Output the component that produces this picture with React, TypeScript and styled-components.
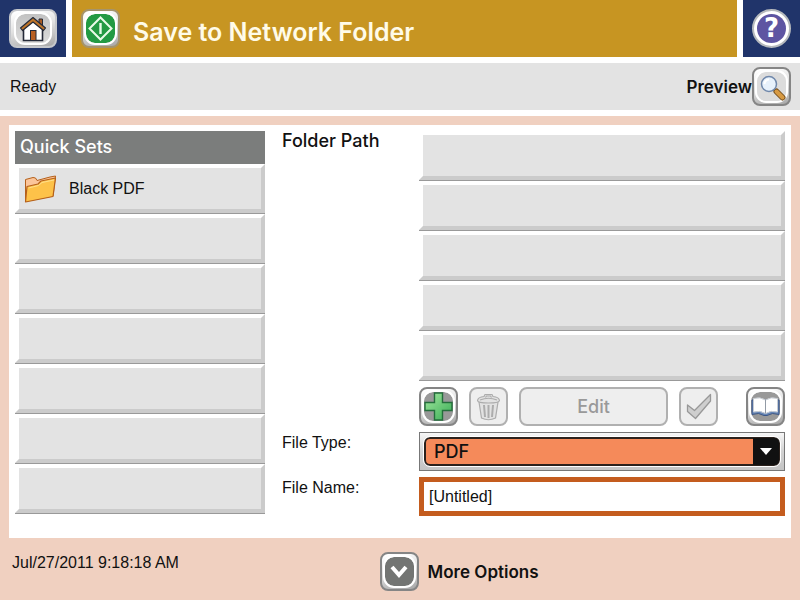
import React from "react";
import styled, { createGlobalStyle, css } from "styled-components";

const GlobalStyle = createGlobalStyle`
  *, *::before, *::after { box-sizing: border-box; }
  body {
    margin: 0;
    background: #f0d0c0;
    color: #111;
    font-family: "Liberation Sans", Arial, sans-serif;
    font-size: 16px;
    line-height: 22px;
  }
  button, input, select { font: inherit; color: inherit; margin: 0; }
  ul { list-style: none; margin: 0; padding: 0; }
`;

const Screen = styled.div`
  display: flex;
  flex-direction: column;
  min-height: 100vh;
`;

const Header = styled.header`
  display: flex;
  gap: 6px;
  height: 63px;
  padding-bottom: 6px;
  background: #fff;
`;

const Corner = styled.div<{ $width: number }>`
  display: flex;
  flex: 0 0 ${(p) => p.$width}px;
  align-items: center;
  justify-content: center;
  background: #20346a;
`;

const TitleBar = styled.div`
  display: flex;
  flex: 1;
  align-items: center;
  gap: 13px;
  padding: 0 9px;
  background: #c79522;
`;

const Title = styled.h1`
  margin: 0;
  padding-top: 6px;
  color: #fffbe8;
  font-family: Inter, "Liberation Sans", sans-serif;
  font-size: 25px;
  font-weight: 600;
  line-height: 30px;
`;

const StatusBar = styled.div`
  display: flex;
  align-items: center;
  justify-content: space-between;
  height: 53px;
  padding: 0 9px 0 10px;
  border-bottom: 6px solid #fff;
  background: #e3e3e3;
`;

const strong = css`
  font-family: Inter, "Liberation Sans", sans-serif;
  font-size: 17px;
  font-weight: 600;
`;

const heading = css`
  font-family: Inter, "Liberation Sans", sans-serif;
  font-size: 18px;
  font-weight: 500;
`;

const PreviewGroup = styled.div`
  display: flex;
  align-items: center;
  ${strong}
`;

const Panel = styled.main`
  display: grid;
  grid-template-columns: minmax(180px, 250fr) minmax(100px, 120fr) minmax(280px, 366fr);
  column-gap: 17px;
  margin: 9px 9px 0;
  padding: 6px 6px 22px;
  background: #fff;
`;

const QuickTitle = styled.h2`
  margin: 0;
  padding: 5px 5px 6px;
  background: #7b7d7c;
  color: #fff;
  ${heading}
`;

const bevel = css`
  height: 49px;
  border: 4px solid;
  border-color: #fff #cbcbcb #cbcbcb #fff;
  background: #e3e3e3;
  box-shadow: 0 1px #999;
`;

const QuickSetButton = styled.button`
  ${bevel}
  display: flex;
  align-items: center;
  gap: 12px;
  width: 100%;
  margin-bottom: 1px;
  padding: 0 5px;
  text-align: left;
`;

const QuickItem = styled.li`
  display: flex;
`;

const PathSlot = styled.li`
  ${bevel}
  margin-bottom: 1px;
`;

const Settings = styled.div`
  display: grid;
  grid-column: 2 / 4;
  grid-template-columns: subgrid;
  row-gap: 6px;
  align-content: start;
`;

const FieldLabel = styled.label`
  white-space: nowrap;
`;

const SectionLabel = styled.h2`
  margin: 0;
  line-height: 20px;
  ${heading}
`;

const Toolbar = styled.div`
  display: flex;
  grid-column: 2;
  gap: 11px;
`;

const Spacer = styled.span`
  width: 6px;
`;

const KeyButton = styled.button<{ $wide?: boolean; $frame?: string }>`
  display: flex;
  flex: none;
  align-items: center;
  justify-content: center;
  width: ${(p) => (p.$wide ? 48 : 39)}px;
  height: 39px;
  padding: 0;
  border: 2px solid ${(p) => p.$frame ?? "#858585"};
  border-radius: 8px;
  background: linear-gradient(165deg, #fff 5%, #e2e2e2 45%, #a6a6a6 100%);
  &:disabled {
    border-color: #b0b0b0;
    background: #eee;
    color: #999;
  }
`;

const EditButton = styled(KeyButton)`
  flex: 1;
  width: auto;
  ${heading}
`;

const KeyFace = styled.span<{ $fill?: string; $wide?: boolean }>`
  display: flex;
  align-items: center;
  justify-content: center;
  width: ${(p) => (p.$wide ? 38 : 33)}px;
  height: 33px;
  border: 2px solid #fff;
  border-radius: 11px;
  background: ${(p) => p.$fill ?? "linear-gradient(#c2c2c2, #dcdcdc)"};
  background-clip: padding-box;
`;

const HelpButton = styled.button`
  display: flex;
  align-items: center;
  justify-content: center;
  width: 39px;
  height: 39px;
  padding: 0;
  border: 2px solid #b5b9bd;
  border-radius: 50%;
  background: #fff;
`;

const HelpMark = styled.span`
  width: 29px;
  height: 29px;
  border-radius: 50%;
  background: #5e55a2;
  color: #fff;
  font-family: "DejaVu Sans", sans-serif;
  font-size: 26px;
  font-weight: 700;
  line-height: 29px;
  text-align: center;
`;

const SelectFrame = styled.div`
  position: relative;
  height: 39px;
  padding: 4px;
  border: 1px solid #777;
  background: linear-gradient(#f6f6f6, #d2d2d2 50%, #c4c4c4);
`;

const TypeSelect = styled.select`
  width: 100%;
  height: 29px;
  padding: 0 32px 0 8px;
  appearance: none;
  border: 2px solid #2b211c;
  border-radius: 6px;
  outline: 1px solid #fff;
  background: #f58a5a;
  ${heading}
`;

const SelectArrow = styled.span`
  position: absolute;
  top: 5px;
  right: 5px;
  display: flex;
  align-items: center;
  justify-content: center;
  width: 26px;
  height: 27px;
  border-radius: 0 5px 5px 0;
  background: #111;
  pointer-events: none;
`;

const NameInput = styled.input`
  width: 100%;
  height: 39px;
  padding: 0 5px;
  border: 5px solid #c45c1e;
  border-radius: 0;
  outline: none;
  background: #fff;
`;

const Footer = styled.footer`
  display: grid;
  grid-template-columns: 9fr 10fr;
  padding: 14px 12px 9px;
`;

const MoreOptions = styled.div`
  display: flex;
  align-items: center;
  gap: 9px;
  ${strong}
`;

const HomeIcon = () => (
  <svg width="28" height="26" viewBox="0 0 28 26" aria-hidden="true">
    <path d="M20 3 h3.500 v7 l-3.500 -3z" fill="#a85b22" stroke="#252a38" />
    <path d="M4.500 13 L14 5 L23.500 13 V24.500 H4.500Z" fill="#fff" stroke="#252a38" strokeWidth="1.600" />
    <path d="M14 1.500 L26.500 12 L24.500 14.500 L14 6 L3.500 14.500 L1.500 12Z" fill="#bd7429" stroke="#252a38" strokeWidth="1.200" strokeLinejoin="round" />
    <rect x="11.500" y="14.500" width="5.500" height="10" fill="#b96023" stroke="#252a38" />
  </svg>
);

const StartIcon = () => (
  <svg width="25" height="25" viewBox="0 0 25 25" fill="none" stroke="#e9fbe8" aria-hidden="true">
    <path d="M12.500 1.500 L23.500 12.500 L12.500 23.500 L1.500 12.500Z" strokeWidth="2" />
    <path d="M12.500 7 V18" strokeWidth="2.400" />
  </svg>
);

const MagnifierIcon = () => (
  <svg width="28" height="28" viewBox="0 0 28 28" aria-hidden="true">
    <path d="M15.500 16 L19 19.500" stroke="#777" strokeWidth="3" />
    <path d="M18.500 18.500 L24.500 24.500" stroke="#77501e" strokeWidth="6" strokeLinecap="round" />
    <path d="M18.500 18.500 L24.500 24.500" stroke="#d79a43" strokeWidth="4" strokeLinecap="round" />
    <circle cx="11" cy="11" r="7.500" fill="#e7f1fb" stroke="#7088ab" strokeWidth="1.500" />
    <path d="M6.500 11 A4.500 4.500 0 0 1 11 6.500" fill="none" stroke="#fff" strokeWidth="2" />
  </svg>
);

const FolderIcon = () => (
  <svg width="33" height="30" viewBox="0 0 33 30" strokeLinejoin="round" aria-hidden="true">
    <path d="M1.500 27 V5.500 L9 3.500 L11.500 4 L13 6.500 L26 3 L31.500 2 L29 22Z" fill="#fbc59a" stroke="#b5601b" />
    <path d="M1.500 28 L3 12.500 L14 10 L17 7 L31.500 4 L29 22.500Z" fill="#fdc249" stroke="#b5601b" strokeWidth="1.200" />
    <path d="M4.500 14 L14.500 11.500 L18 8.500 L30 6" fill="none" stroke="#ffe08b" />
  </svg>
);

const PlusIcon = () => (
  <svg width="29" height="29" viewBox="0 0 29 29" aria-hidden="true">
    <defs>
      <linearGradient id="plusFill" x1="0" y1="0" x2="1" y2="1">
        <stop offset="0" stopColor="#a4e8a0" />
        <stop offset="1" stopColor="#38ad55" />
      </linearGradient>
    </defs>
    <path d="M10.500 1 H18.500 V10.500 H28 V18.500 H18.500 V28 H10.500 V18.500 H1 V10.500 H10.500Z" fill="url(#plusFill)" stroke="#246e3c" strokeWidth="1.400" />
  </svg>
);

const TrashIcon = () => (
  <svg width="25" height="28" viewBox="0 0 25 28" fill="#e2e2e2" stroke="#acacac" strokeWidth="1.200" aria-hidden="true">
    <path d="M3 9 L5.500 25 Q12.500 28.500 19.500 25 L22 9Z" />
    <path d="M8 12 L9 24 M12.500 12 V25 M17 12 L16 24" strokeWidth="2" />
    <path d="M1.500 7.500 Q2 4 8 3.500 L9 1.500 H16 L17 3.500 Q23 4 23.500 7.500 Q23.500 10 12.500 10 Q1.500 10 1.500 7.500Z" />
    <path d="M4 7 Q12.500 3.500 21 7 M9.500 4.500 L10.500 3 H14.500 L15.500 4.500" fill="none" />
  </svg>
);

const CheckIcon = () => (
  <svg width="26" height="27" viewBox="0 0 26 27" aria-hidden="true">
    <path d="M1.500 12 L8.500 17.500 L24.500 1.500 V8 L9.500 25.500 L1.500 18.500Z" fill="#cecece" stroke="#989898" strokeWidth="1.300" strokeLinejoin="round" />
  </svg>
);

const BookIcon = () => (
  <svg width="29" height="21" viewBox="0 0 29 21" strokeLinejoin="round" aria-hidden="true">
    <path d="M1 4 V18.500 Q8 16 13 19.500 H16 Q21 16 28 18.500 V4Z" fill="#6485b7" stroke="#3c5787" />
    <path d="M2.500 2.500 Q9 .5 14.500 4 Q20 .5 26.500 2.500 V16 Q20 14 14.500 17.500 Q9 14 2.500 16Z" fill="#fff" stroke="#c7ccd3" />
    <path d="M14.500 4 V17.500" stroke="#929aa5" />
  </svg>
);

const ChevronIcon = () => (
  <svg width="20" height="16" viewBox="0 0 20 16" fill="none" aria-hidden="true">
    <path d="M3 3 L10 11 L17 3" stroke="#fff" strokeWidth="4" />
  </svg>
);

const quickSets = ["Black PDF", "", "", "", "", "", ""];
const folderPaths = [1, 2, 3, 4, 5];

export default function App() {
  return (
    <Screen>
      <GlobalStyle />
      <Header>
        <Corner $width={66}>
          <KeyButton $wide $frame="#c5c7cb" aria-label="Home">
            <KeyFace $wide><HomeIcon /></KeyFace>
          </KeyButton>
        </Corner>
        <TitleBar>
          <KeyButton $frame="#a5946c" aria-label="Start">
            <KeyFace $fill="#239a43"><StartIcon /></KeyFace>
          </KeyButton>
          <Title>Save to Network Folder</Title>
        </TitleBar>
        <Corner $width={57}>
          <HelpButton aria-label="Help"><HelpMark>?</HelpMark></HelpButton>
        </Corner>
      </Header>

      <StatusBar>
        <span>Ready</span>
        <PreviewGroup>
          <label htmlFor="preview">Preview</label>
          <KeyButton id="preview">
            <KeyFace $fill="#dcdcdc"><MagnifierIcon /></KeyFace>
          </KeyButton>
        </PreviewGroup>
      </StatusBar>

      <Panel>
        <section>
          <QuickTitle>Quick Sets</QuickTitle>
          <ul>
            {quickSets.map((name, i) => (
              <QuickItem key={i}>
                <QuickSetButton disabled={!name} aria-label={name || "Empty quick set"}>
                  {name && <><FolderIcon />{name}</>}
                </QuickSetButton>
              </QuickItem>
            ))}
          </ul>
        </section>

        <Settings>
          <SectionLabel id="paths">Folder Path</SectionLabel>
          <ul aria-labelledby="paths">
            {folderPaths.map((n) => <PathSlot key={n} />)}
          </ul>
          <Toolbar>
            <KeyButton aria-label="Add"><KeyFace $fill="#999"><PlusIcon /></KeyFace></KeyButton>
            <KeyButton disabled aria-label="Delete"><TrashIcon /></KeyButton>
            <EditButton disabled>Edit</EditButton>
            <KeyButton disabled aria-label="Accept"><CheckIcon /></KeyButton>
            <Spacer />
            <KeyButton aria-label="Address book"><KeyFace $fill="#999"><BookIcon /></KeyFace></KeyButton>
          </Toolbar>
          <FieldLabel htmlFor="type">File Type:</FieldLabel>
          <SelectFrame>
            <TypeSelect id="type" defaultValue="PDF"><option>PDF</option></TypeSelect>
            <SelectArrow>
              <svg width="12" height="7" viewBox="0 0 12 7" aria-hidden="true"><path d="M0 0 H12 L6 7Z" fill="#fff" /></svg>
            </SelectArrow>
          </SelectFrame>
          <FieldLabel htmlFor="name">File Name:</FieldLabel>
          <NameInput id="name" defaultValue="[Untitled]" />
        </Settings>
      </Panel>

      <Footer>
        <time dateTime="2011-07-27T09:18:18">Jul/27/2011 9:18:18 AM</time>
        <MoreOptions>
          <KeyButton id="more"><KeyFace $fill="#737573"><ChevronIcon /></KeyFace></KeyButton>
          <label htmlFor="more">More Options</label>
        </MoreOptions>
      </Footer>
    </Screen>
  );
}
